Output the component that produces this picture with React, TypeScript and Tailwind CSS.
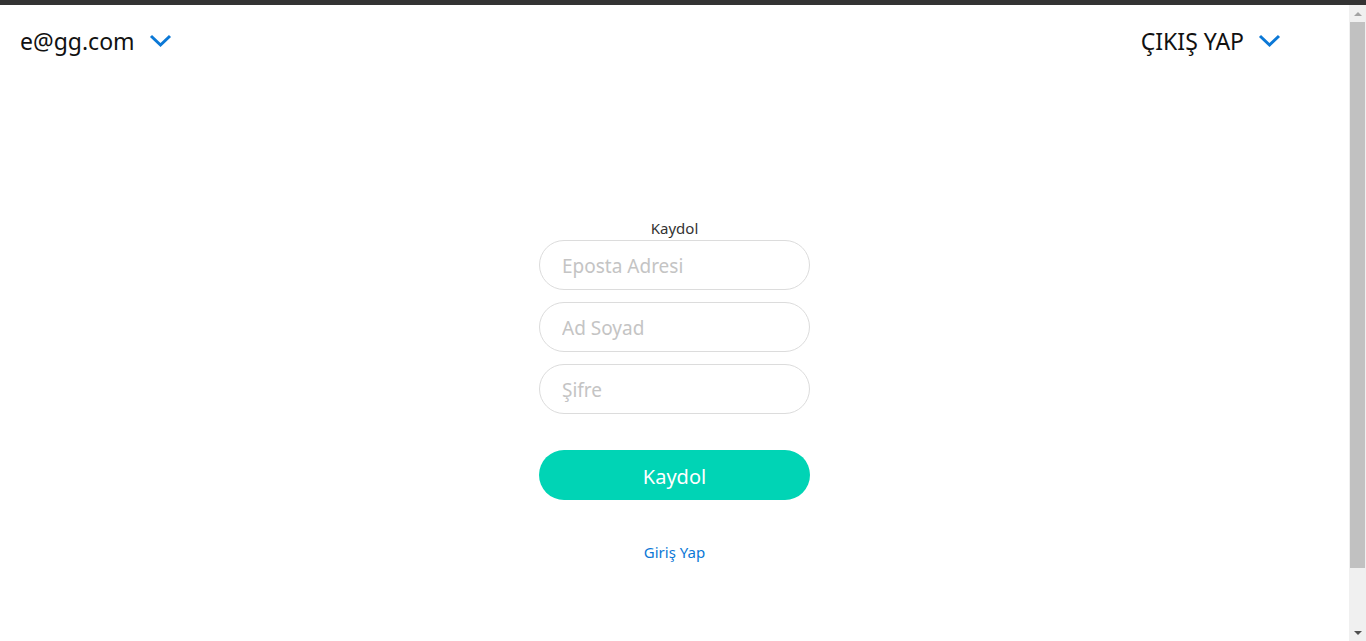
import React from "react";

function Chevron() {
  return (
    <svg width="23" height="14" viewBox="0 0 23 14" fill="none" className="ml-[14px]">
      <polyline points="2,2 11.5,11 21,2" stroke="#0b78d6" strokeWidth="3" fill="none" />
    </svg>
  );
}

export default function App() {
  return (
    <div className="h-[641px] flex flex-col bg-white overflow-hidden" style={{ fontFamily: '"Noto Sans", "Open Sans", sans-serif' }}>
      <div className="h-[5px] bg-[#333333] shrink-0" />
      <div className="flex flex-1 min-h-0">
        <div className="flex-1 flex flex-col">
          <header className="h-[72px] flex items-center justify-between pl-5 pr-[68px]">
            <div className="flex items-center text-[23px] text-[#111]">
              <span>e@gg.com</span>
              <Chevron />
            </div>
            <div className="flex items-center text-[23px] text-[#111]">
              <span>ÇIKIŞ YAP</span>
              <Chevron />
            </div>
          </header>

          <div className="mt-[141px] flex flex-col items-center">
            <div className="w-[271px] flex flex-col">
              <p className="text-center text-[15px] leading-5 text-[#333]">Kaydol</p>
              <div className="mt-[2px] flex flex-col gap-3">
                <input
                  placeholder="Eposta Adresi"
                  className="h-[50px] w-full rounded-full border border-[#dcdcdc] px-[22px] pt-[2px] text-[19px] outline-none placeholder:text-[#c4c4c4]"
                />
                <input
                  placeholder="Ad Soyad"
                  className="h-[50px] w-full rounded-full border border-[#dcdcdc] px-[22px] pt-[2px] text-[19px] outline-none placeholder:text-[#c4c4c4]"
                />
                <input
                  type="password"
                  placeholder="Şifre"
                  className="h-[50px] w-full rounded-full border border-[#dcdcdc] px-[22px] pt-[2px] text-[19px] outline-none placeholder:text-[#c4c4c4]"
                />
              </div>
              <button className="mt-9 h-[50px] w-full rounded-full bg-[#00d4b5] pt-[3px] text-[20px] text-white">
                Kaydol
              </button>
              <a href="#" className="mt-[41px] text-center text-[15px] text-[#0b78d6]">
                Giriş Yap
              </a>
            </div>
          </div>
        </div>

        <div className="w-[17px] bg-[#f0f0f0] flex flex-col items-center shrink-0">
          <div className="h-[17px] flex items-center justify-center">
            <div className="w-0 h-0 border-l-[4px] border-r-[4px] border-b-[4px] border-l-transparent border-r-transparent border-b-[#a3a3a3]" />
          </div>
          <div className="w-[15px] h-[546px] bg-[#c1c1c1]" />
          <div className="flex-1" />
          <div className="h-[17px] flex items-center justify-center">
            <div className="w-0 h-0 border-l-[4px] border-r-[4px] border-t-[4px] border-l-transparent border-r-transparent border-t-[#505050]" />
          </div>
        </div>
      </div>
    </div>
  );
}
